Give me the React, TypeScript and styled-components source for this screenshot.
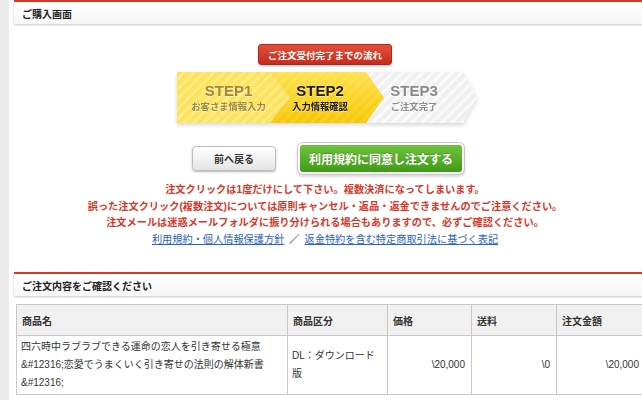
import styled, { createGlobalStyle } from "styled-components"

const GlobalStyle = createGlobalStyle`
    html, body {
        margin: 0;
        padding: 0;
        background: #fff;
        overflow: hidden;
    }
    body {
        font-family: "Liberation Sans", "Noto Sans CJK JP", sans-serif;
        color: #333;
    }
`

const Page = styled.div`
    display: flex;
    min-height: 400px;
`

const SideStrip = styled.div`
    width: 9px;
    flex-shrink: 0;
    background: #ececec;
`

const Main = styled.div`
    width: 622px;
    flex-shrink: 0;
    margin-left: 5px;
    display: flex;
    flex-direction: column;
    align-items: center;
`

const SectionHeader = styled.div<{ $top?: number }>`
    align-self: flex-start;
    width: 650px;
    height: 22px;
    margin-top: ${(p) => p.$top ?? 0}px;
    border-top: 2px solid #cf3a26;
    background: linear-gradient(#ffffff, #f6f6f6);
    box-shadow: 0 1px 2px rgba(0, 0, 0, 0.22);
    display: flex;
    align-items: center;
    padding-left: 8px;
    font-size: 10px;
    font-weight: bold;
    color: #222;
`

const FlowBadge = styled.div`
    margin-top: 20px;
    height: 21px;
    width: 134px;
    box-sizing: border-box;
    border: 1px solid #b3281a;
    border-radius: 3px;
    background: linear-gradient(#e4503a, #c52c1d);
    box-shadow: 0 1px 2px rgba(0, 0, 0, 0.25);
    display: flex;
    align-items: center;
    justify-content: center;
    color: #fff;
    font-size: 9.5px;
    font-weight: bold;
`

const Steps = styled.div`
    margin-top: 7px;
    margin-left: 4px;
    display: flex;
    filter: drop-shadow(0 2px 2px rgba(0, 0, 0, 0.16));
`

const stepSkins = {
    done: {
        bg: "repeating-linear-gradient(135deg, #fde35c 0 4px, #feeb86 4px 7px)",
        color: "#9d8a3c",
        shadow: "0 1px 0 rgba(255,255,255,0.6)",
    },
    current: {
        bg: "repeating-linear-gradient(135deg, rgba(255,255,255,0.1) 0 4px, rgba(255,255,255,0) 4px 7px), linear-gradient(#ffe14a, #f7c600)",
        color: "#1e1a10",
        shadow: "0 1px 0 rgba(255,255,255,0.5)",
    },
    todo: {
        bg: "repeating-linear-gradient(135deg, #f0f0f0 0 4px, #fafafa 4px 7px)",
        color: "#8a8a8a",
        shadow: "0 1px 0 rgba(255,255,255,0.8)",
    },
}

type StepKind = keyof typeof stepSkins

const Step = styled.div<{ $kind: StepKind; $w: number; $tip: number; $notch: number; $overlap: number; $pad: number }>`
    width: ${(p) => p.$w}px;
    height: 51px;
    margin-left: ${(p) => -p.$overlap}px;
    padding-right: ${(p) => p.$pad}px;
    box-sizing: border-box;
    background: ${(p) => stepSkins[p.$kind].bg};
    color: ${(p) => stepSkins[p.$kind].color};
    text-shadow: ${(p) => stepSkins[p.$kind].shadow};
    clip-path: polygon(
        0 0,
        calc(100% - ${(p) => p.$tip}px) 0,
        100% 50%,
        calc(100% - ${(p) => p.$tip}px) 100%,
        0 100%,
        ${(p) => p.$notch}px 50%
    );
    display: flex;
    flex-direction: column;
    align-items: center;
    justify-content: center;
    font-weight: bold;
`

const StepTitle = styled.span`
    font-family: "Liberation Sans", Arial, sans-serif;
    font-size: 15px;
    line-height: 18px;
`

const StepSub = styled.span`
    font-size: 9.3px;
    line-height: 14px;
`

const ButtonRow = styled.div`
    margin-top: 19px;
    display: flex;
    align-items: center;
    gap: 21px;
    margin-left: 7px;
`

const BackButton = styled.button`
    width: 84px;
    height: 25px;
    border: 1px solid #bdbdbd;
    border-radius: 4px;
    background: linear-gradient(#ffffff, #e4e4e4);
    box-shadow: 0 1px 2px rgba(0, 0, 0, 0.3);
    font-family: inherit;
    font-size: 10px;
    font-weight: bold;
    color: #333;
    padding: 0;
`

const OrderButton = styled.button`
    width: 162px;
    height: 27px;
    margin: 3px;
    border: none;
    border-radius: 3px;
    background: linear-gradient(#6ec43c, #3f9b17);
    box-shadow: 0 0 0 2px #fff, 0 0 0 3px #c9c9c9, 0 2px 3px 3px rgba(0, 0, 0, 0.15);
    font-family: inherit;
    font-size: 12px;
    font-weight: bold;
    color: #fff;
    text-shadow: 0 -1px 0 rgba(0, 0, 0, 0.2);
    padding: 0;
`

const Notes = styled.div`
    margin-top: 7px;
    display: flex;
    flex-direction: column;
    align-items: center;
    font-size: 10.2px;
    line-height: 16.5px;
    white-space: nowrap;
`

const Warning = styled.p`
    margin: 0;
    color: #d8382a;
    font-weight: bold;
`

const LinkLine = styled.p`
    margin: 0;
    color: #333;
`

const TextLink = styled.a`
    color: #2b62c4;
    text-decoration: underline;
`

const Slash = styled.span`
    margin: 0 5px;
    color: #222;
    font-weight: bold;
`

const OrderTable = styled.table`
    align-self: flex-start;
    margin: 8px 0 0 2px;
    width: 629px;
    border-collapse: collapse;
    table-layout: fixed;
    font-size: 10px;
    color: #333;
`

const HeadCell = styled.th<{ $w: number }>`
    width: ${(p) => p.$w}px;
    height: 31px;
    box-sizing: border-box;
    border: 1px solid #c8c8c8;
    background: #f1f1f1;
    text-align: left;
    padding: 0 5px;
    font-weight: bold;
`

const BodyCell = styled.td<{ $right?: boolean }>`
    border: 1px solid #c8c8c8;
    padding: 2px 6px 2px 4px;
    line-height: 18px;
    text-align: ${(p) => (p.$right ? "right" : "left")};
    vertical-align: middle;
    background: #fff;
`

const columns = [
    { label: "商品名", width: 271 },
    { label: "商品区分", width: 100 },
    { label: "価格", width: 84 },
    { label: "送料", width: 85 },
    { label: "注文金額", width: 89 },
]

const order = {
    name: "四六時中ラブラブできる運命の恋人を引き寄せる極意&#12316;恋愛でうまくいく引き寄せの法則の解体新書&#12316;",
    kind: "DL：ダウンロード版",
    price: "\\20,000",
    shipping: "\\0",
    total: "\\20,000",
}

export default function App() {
    return (
        <>
            <GlobalStyle />
            <Page>
                <SideStrip />
                <Main>
                    <SectionHeader>ご購入画面</SectionHeader>
                    <FlowBadge>ご注文受付完了までの流れ</FlowBadge>
                    <Steps>
                        <Step $kind="done" $w={113} $tip={20} $notch={0} $overlap={0} $pad={10}>
                            <StepTitle>STEP1</StepTitle>
                            <StepSub>お客さま情報入力</StepSub>
                        </Step>
                        <Step $kind="current" $w={114} $tip={18} $notch={20} $overlap={20} $pad={14}>
                            <StepTitle>STEP2</StepTitle>
                            <StepSub>入力情報確認</StepSub>
                        </Step>
                        <Step $kind="todo" $w={111} $tip={14} $notch={18} $overlap={18} $pad={15}>
                            <StepTitle>STEP3</StepTitle>
                            <StepSub>ご注文完了</StepSub>
                        </Step>
                    </Steps>
                    <ButtonRow>
                        <BackButton>前へ戻る</BackButton>
                        <OrderButton>利用規約に同意し注文する</OrderButton>
                    </ButtonRow>
                    <Notes>
                        <Warning>注文クリックは1度だけにして下さい。複数決済になってしまいます。</Warning>
                        <Warning>誤った注文クリック(複数注文)については原則キャンセル・返品・返金できませんのでご注意ください。</Warning>
                        <Warning>注文メールは迷惑メールフォルダに振り分けられる場合もありますので、必ずご確認ください。</Warning>
                        <LinkLine>
                            <TextLink href="#">利用規約・個人情報保護方針</TextLink>
                            <Slash>／</Slash>
                            <TextLink href="#">返金特約を含む特定商取引法に基づく表記</TextLink>
                        </LinkLine>
                    </Notes>
                    <SectionHeader $top={24}>ご注文内容をご確認ください</SectionHeader>
                    <OrderTable>
                        <thead>
                            <tr>
                                {columns.map((c) => (
                                    <HeadCell key={c.label} $w={c.width}>{c.label}</HeadCell>
                                ))}
                            </tr>
                        </thead>
                        <tbody>
                            <tr>
                                <BodyCell>{order.name}</BodyCell>
                                <BodyCell>{order.kind}</BodyCell>
                                <BodyCell $right>{order.price}</BodyCell>
                                <BodyCell $right>{order.shipping}</BodyCell>
                                <BodyCell $right>{order.total}</BodyCell>
                            </tr>
                        </tbody>
                    </OrderTable>
                </Main>
            </Page>
        </>
    )
}
